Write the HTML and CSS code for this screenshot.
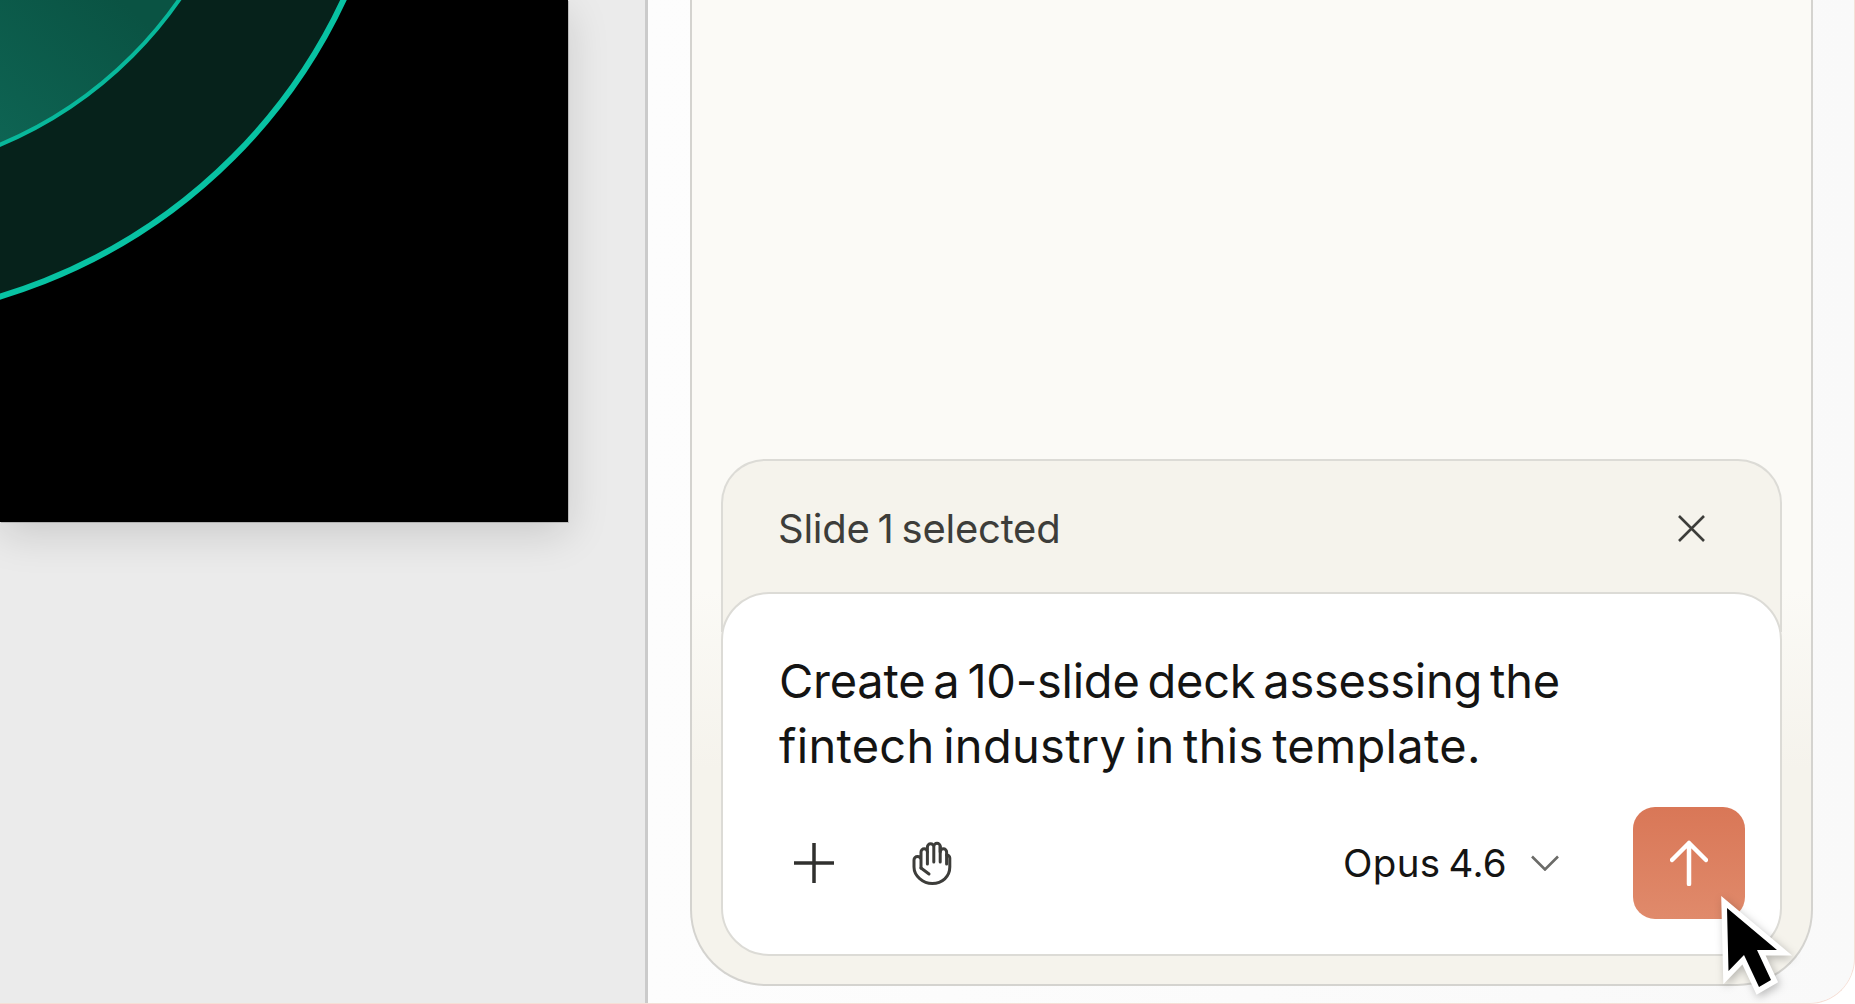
FILE: index.html
```html
<!DOCTYPE html>
<html lang="en">
<head>
    <meta charset="UTF-8">
    <title>Slide deck editor</title>
    <link rel="stylesheet" href="styles.css">
</head>
<body>
    <div class="window">
        <section class="stage">
            <div class="slide">
                <svg class="slide-art" viewBox="0 0 568 522" aria-hidden="true">
                    <defs>
                        <linearGradient id="core-fill" gradientUnits="userSpaceOnUse" x1="120" y1="0" x2="0" y2="140">
                            <stop offset="0" stop-color="#0a5343"/>
                            <stop offset="1" stop-color="#0e6453"/>
                        </linearGradient>
                    </defs>
                    <circle cx="-160" cy="-236" r="556" fill="#06221b" stroke="#08c2a3" stroke-width="6"/>
                    <circle cx="-160" cy="-236" r="413" fill="url(#core-fill)" stroke="#08b89b" stroke-width="4"/>
                </svg>
            </div>
        </section>

        <aside class="rail">
            <div class="panel">
                <div class="selection">
                    <span class="selection-label">Slide 1 selected</span>
                    <svg class="selection-close" viewBox="0 0 27 27" aria-hidden="true">
                        <path d="M1 1 26 26M26 1 1 26"/>
                    </svg>
                </div>

                <div class="composer">
                    <p class="composer-text">
                        <span class="composer-line">Create a 10-slide deck assessing the</span>
                        <span class="composer-line">fintech industry in this template.</span>
                    </p>
                    <div class="toolbar">
                        <span class="tool">
                            <svg class="tool-plus" viewBox="0 0 42 42" aria-hidden="true">
                                <path d="M21 1V41M1 21H41"/>
                            </svg>
                        </span>
                        <span class="tool">
                            <svg class="tool-hand" viewBox="0 0 40 44" aria-hidden="true">
                                <path d="M9 27V11a3.2 3.2 0 0 1 6.400 0V6a3.200 3.200 0 0 1 6.400 0v15M21.800 6v-.5a3.200 3.200 0 0 1 6.400 0V11a3.200 3.200 0 0 1 6.400 0 v3a3 3 0 0 1 3.200 3v9c0 9.500-7.500 16.500-17.500 16.500C11 42.500 2 35 2 26v-7a3.500 3.500 0 0 1 7 0"/>
                                <path d="M15.400 11v12M28.200 5.500V21M34.600 14v9M9 27l8 6"/>
                            </svg>
                        </span>
                        <span class="model">
                            <span class="model-name">Opus 4.6</span>
                            <svg class="model-caret" viewBox="0 0 28 16" aria-hidden="true">
                                <path d="M1 1.500 14 14.500 27 1.500"/>
                            </svg>
                        </span>
                        <span class="send">
                            <svg class="send-arrow" viewBox="0 0 38 46" aria-hidden="true">
                                <path d="M19 44V3M2 20 19 3 36 20"/>
                            </svg>
                        </span>
                    </div>
                </div>
            </div>
        </aside>

        <svg class="pointer" viewBox="0 0 70 100" aria-hidden="true">
            <path d="M6 13 7.500 76 23 60 38 92 50 85 36 55H56Z"/>
        </svg>
    </div>
</body>
</html>
```

FILE: styles.css
```css
:root {
    --stage: #ebebeb;
    --cream: #fbfaf6;
    --sand: #f5f3ec;
    --line: #d4d3cf;
    --line-soft: #dcdbd6;
    --ink: #141413;
    --ink-soft: #3d3d3a;
    --accent: #d97757;
}

* {
    box-sizing: border-box;
    margin: 0;
    padding: 0;
}

html,
body {
    height: 100%;
    overflow: hidden;
    background-color: white;
}

body {
    font-family: 'Inter', 'Liberation Sans', sans-serif;
    color: var(--ink);
}

.window {
    position: relative;
    display: flex;
    height: 100vh;
    overflow: hidden;
    border-right: 1px solid #f6dfd6;
    border-bottom: 1px solid #f6dfd6;
    border-bottom-right-radius: 46px;
    background-color: #fafafa;
}

.stage {
    flex: 0 0 648px;
    background-color: var(--stage);
    border-right: 3px solid #cbcbcb;
}

.slide {
    width: 568px;
    height: 522px;
    background-color: black;
    box-shadow: 0 12px 40px rgba(0, 0, 0, 0.14), 1px 1px 0 #c4c4c4;
}

.slide-art {
    display: block;
    width: 100%;
    height: 100%;
}

.rail {
    flex: 1;
    display: flex;
    padding: 0 41px 17px 42px;
    background: linear-gradient(to right, #fdfdfd, #f9f9f9);
}

.panel {
    flex: 1;
    display: flex;
    flex-direction: column;
    justify-content: flex-end;
    padding: 0 29px 28px;
    background: linear-gradient(var(--cream) 60%, var(--sand) 78%);
    border: 2px solid var(--line);
    border-top: none;
    border-bottom-left-radius: 76px;
    border-bottom-right-radius: 76px;
}

.selection {
    display: flex;
    justify-content: space-between;
    align-items: flex-start;
    height: 173px;
    margin-bottom: -40px;
    padding: 41px 75px 0 55px;
    background-color: var(--sand);
    border: 2px solid var(--line-soft);
    border-bottom: none;
    border-radius: 44px 44px 0 0;
}

.selection-label {
    font-size: 40px;
    line-height: 54px;
    letter-spacing: -0.250px;
    word-spacing: -3px;
    color: var(--ink-soft);
}

.selection-close {
    width: 27px;
    height: 27px;
    margin-top: 13px;
    fill: none;
    stroke: var(--ink-soft);
    stroke-width: 2.600;
}

.composer {
    position: relative;
    display: flex;
    flex-direction: column;
    gap: 29px;
    height: 364px;
    padding: 54px 35px 35px 56px;
    background-color: white;
    border: 2px solid var(--line-soft);
    border-radius: 48px;
}

.composer-text {
    font-size: 47px;
    line-height: 65px;
    letter-spacing: -0.250px;
    word-spacing: -5px;
}

.composer-line {
    display: block;
    white-space: nowrap;
}

.composer-line + .composer-line {
    letter-spacing: 0.300px;
}

.toolbar {
    display: flex;
    align-items: center;
    gap: 54px;
    margin-left: 3px;
}

.tool {
    display: flex;
    justify-content: center;
    align-items: center;
    width: 64px;
    height: 64px;
}

.tool-plus {
    width: 42px;
    height: 42px;
    fill: none;
    stroke: #30302e;
    stroke-width: 3.500;
}

.tool-hand {
    width: 40px;
    height: 44px;
    fill: none;
    stroke: var(--ink-soft);
    stroke-width: 3;
    stroke-linecap: round;
    stroke-linejoin: round;
}

.model {
    display: flex;
    align-items: center;
    gap: 24px;
    margin-left: auto;
    margin-right: 20px;
}

.model-name {
    font-size: 38.500px;
    word-spacing: -3px;
    letter-spacing: 0.300px;
}

.model-caret {
    width: 28px;
    height: 16px;
    fill: none;
    stroke: #6b6b68;
    stroke-width: 2.600;
}

.send {
    display: flex;
    justify-content: center;
    align-items: center;
    width: 112px;
    height: 112px;
    background: linear-gradient(var(--accent), #e08a6b);
    border-radius: 22px;
}

.send-arrow {
    width: 38px;
    height: 46px;
    fill: none;
    stroke: white;
    stroke-width: 4.500;
    stroke-linecap: round;
    stroke-linejoin: round;
}

/* the mouse pointer sits over the send button */
.pointer {
    position: absolute;
    left: 1721px;
    top: 895px;
    width: 70px;
    height: 100px;
    overflow: visible;
    fill: black;
    stroke: white;
    stroke-width: 11;
    paint-order: stroke;
    stroke-linejoin: miter;
    stroke-miterlimit: 6;
    filter: drop-shadow(2px 3px 4px rgba(0, 0, 0, 0.25));
}
```
